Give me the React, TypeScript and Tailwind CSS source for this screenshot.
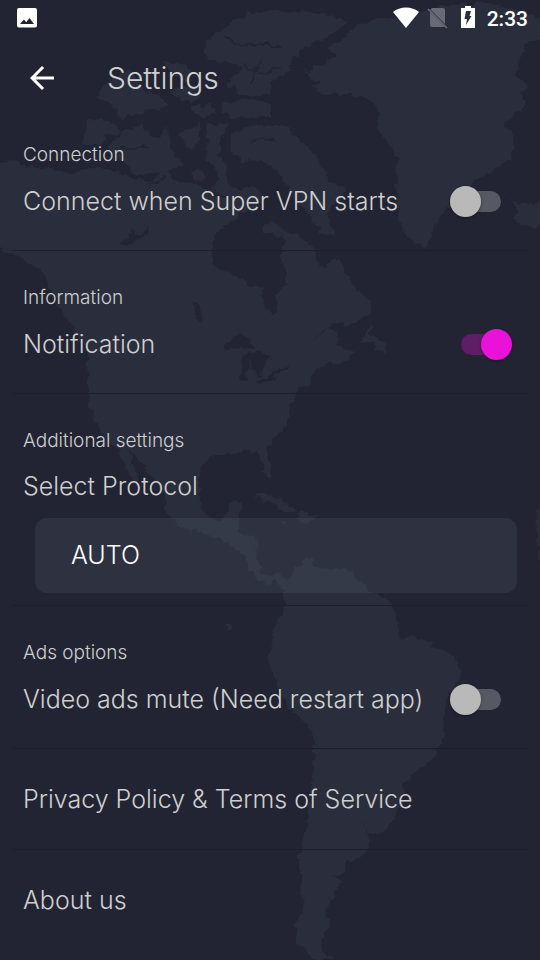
import { useState } from "react";
import type { ReactNode } from "react";

const protocols = ["AUTO", "UDP", "TCP"];

function WorldMap() {
  return (
    <svg
      className="absolute inset-0 h-full w-full"
      viewBox="0 0 540 960"
      preserveAspectRatio="xMidYMin slice"
      aria-hidden="true"
    >
      <defs>
        {/* roughens the coast lines */}
        <filter
          id="coast"
          x="0"
          y="0"
          width="540"
          height="960"
          filterUnits="userSpaceOnUse"
          colorInterpolationFilters="sRGB"
        >
          <feTurbulence type="fractalNoise" baseFrequency="0.13" numOctaves="3" seed="4" />
          <feDisplacementMap in="SourceGraphic" scale="9" xChannelSelector="R" yChannelSelector="G" />
        </filter>
      </defs>
      <g filter="url(#coast)">
        <g fill="#2a2d3b">
          {/* the Americas */}
          <path d="M-10 163 15 160 22 165 50 169 75 173 95 167 110 170 130 178 150 180 165 171 175 179 192 183 203 190 214 186 220 172 206 160 207 142 206 124 228 124 222 138 218 155 226 168 228 185 240 190 252 184 262 196 256 208 240 214 225 226 213 240 211 255 214 266 222 272 235 276 250 285 262 288 264 305 270 314 278 312 276 295 285 285 287 275 283 262 280 255 284 245 282 232 290 233 305 240 315 248 316 260 325 268 336 255 345 270 350 282 362 294 372 302 373 312 365 318 350 325 335 323 325 330 312 342 330 328 338 332 337 345 345 352 355 350 350 358 335 366 328 362 312 373 310 385 297 388 297 395 290 405 288 425 275 437 267 448 268 460 272 475 270 481 263 470 260 456 245 450 232 455 215 455 202 465 199 480 200 500 206 515 215 521 225 519 229 505 242 502 240 515 238 533 255 537 258 545 256 560 262 572 272 576 280 573 285 582 290 578 297 568 310 557 313 565 330 570 345 567 360 580 370 593 385 598 395 610 398 625 400 640 410 635 425 642 445 650 458 660 461 675 455 688 447 697 444 715 443 735 435 757 425 765 410 775 404 785 405 800 398 810 388 828 380 834 368 832 363 820 369 840 368 850 360 858 345 862 345 872 336 876 340 885 333 900 325 910 330 922 325 935 320 945 325 954 334 959 318 959 310 957 305 950 297 943 296 925 303 905 300 890 303 875 299 870 300 850 308 820 311 795 315 750 312 730 300 718 287 705 275 680 268 660 272 645 274 628 283 612 284 600 284 592 275 580 268 585 258 580 250 570 246 558 237 550 220 540 208 534 190 530 170 520 166 510 167 500 160 485 150 475 140 462 128 448 138 478 140 490 133 480 125 465 118 448 105 440 95 420 88 400 88 370 85 345 72 325 55 305 45 275 25 260 -10 245Z" />
          {/* Greenland */}
          <path d="M305 72 325 63 335 55 327 48 345 38 350 28 375 20 400 20 420 12 450 4 490 4 530 15 550 20 550 36 525 45 520 60 515 75 528 85 520 95 527 105 512 115 505 125 515 140 510 158 490 172 475 180 465 200 445 208 440 218 435 228 430 240 424 247 410 240 400 225 397 200 395 165 398 160 392 150 378 130 380 115 375 105 365 97 350 94 325 95 312 87 320 83Z" />
          {/* Arctic islands */}
          <path d="M206 42 216 34 240 16 270 11 320 12 350 22 330 35 310 45 290 60 290 70 272 84 270 95 240 95 228 84 242 68 222 62 206 58Z" />
          <path d="M222 103 250 98 273 105 272 117 235 118 222 112Z" />
          <path d="M90 118 110 121 122 130 108 136 98 146 82 143Z" />
          <path d="M108 148 120 132 140 126 158 140 168 126 172 150 182 166 165 172 140 176 122 162Z" />
          <path d="M95 97 108 82 130 70 145 92 160 96 168 106 140 113 120 118 112 106Z" />
          <path d="M178 134 200 122 200 142 190 150Z" />
          <path d="M170 92 190 84 202 96 190 104Z" />
          <path d="M190 106 212 105 216 114 200 117Z" />
          <path d="M165 62 182 64 194 72 184 80 170 74Z" />
          <path d="M192 172 202 168 206 177 196 181Z" />
          <path d="M232 135 250 125 284 125 300 140 315 155 330 180 345 190 338 202 325 212 336 238 320 232 306 210 290 192 278 172 262 160 244 162 230 150Z" />
          <path d="M262 228 272 222 286 230 276 238Z" />
          {/* Iceland and the tip of Africa */}
          <path d="M511 197 518 205 530 204 550 198 550 222 528 228 513 220 518 212Z" />
          <path d="M550 495 540 502 536 525 539 560 550 575Z" />
          {/* Newfoundland and the Caribbean */}
          <path d="M371 322 370 335 384 340 386 355 372 344 360 342Z" />
          <path d="M254 498 264 493 280 499 298 511 284 511 270 501Z" />
          <path d="M300 511 322 518 308 523 296 521Z" />
          <path d="M280 521 288 522 282 525Z" />
          <path d="M224 625 230 624 231 629 226 631Z" />
        </g>
        {/* lakes */}
        <g fill="#222433">
          <path d="M118 246 128 239 132 227 138 235 152 226 146 234 133 243Z" />
          <path d="M223 349 240 332 248 338 254 350 240 348Z" />
          <path d="M242 355 262 351 272 358 264 362 261 378 252 370 250 358 246 380 240 380Z" />
          <path d="M259 382 275 372 292 363 282 373 262 383Z" />
          <path d="M192 303 198 300 204 320 200 322Z" />
          <path d="M96 204 112 192 105 200Z" />
        </g>
        <g fill="none" stroke="#222433" strokeWidth="2">
          <path d="M224 36 244 46 268 43 282 50M242 64 262 74 280 66M250 84 262 60M120 146 136 150 150 146M250 142 262 138 275 142M40 268 50 290 58 305M206 188 228 200M148 184 166 178" />
        </g>
      </g>
    </svg>
  );
}

function StatusBar() {
  return (
    <div className="flex h-9 items-center justify-between pr-3 pl-4 text-white">
      <svg width="22" height="22" viewBox="0 0 22 22" aria-hidden="true">
        <path
          fill="currentColor"
          fillRule="evenodd"
          d="M3 1h16a2 2 0 0 1 2 2v15.500a2 2 0 0 1-2 2H3a2 2 0 0 1-2-2V3a2 2 0 0 1 2-2ZM4 17h14l-4.500-6-3.300 4.200L8 12.500Z"
        />
      </svg>
      <div className="flex items-center">
        <svg width="26" height="22" viewBox="0 0 26 22" aria-hidden="true">
          <path fill="currentColor" d="M0 5C3.500 2 8 .5 13 .5S22.500 2 26 5L13 21Z" />
        </svg>
        <svg className="ml-2 text-[#696a75]" width="22" height="22" viewBox="0 0 22 22" aria-hidden="true">
          <path fill="currentColor" d="M5 1h11a2 2 0 0 1 2 2v14L3.500 2.500ZM3 5l15 15H5a2 2 0 0 1-2-2Z" />
          <path stroke="currentColor" strokeWidth="1.600" d="M1 2 20 21" />
        </svg>
        <svg className="ml-3" width="14" height="24" viewBox="0 0 14 24" aria-hidden="true">
          <path
            fill="currentColor"
            fillRule="evenodd"
            d="M4 0h6v2h4v20H0V2h4ZM5 5 3.500 13H6L5 19 10.500 10H8.500L10 5Z"
          />
        </svg>
        <span className="ml-3 pt-0.5 font-['Roboto',sans-serif] text-[21px] leading-6 font-medium">2:33</span>
      </div>
    </div>
  );
}

function Section({ title, children }: { title: string; children: ReactNode }) {
  return (
    <section className="mx-3 border-b border-[#1d1f2b] px-[11px] pt-[33px]">
      <h2 className="text-[19px] leading-7 font-light">{title}</h2>
      {children}
    </section>
  );
}

function SwitchRow({ label, defaultChecked = false }: { label: string; defaultChecked?: boolean }) {
  const [on, setOn] = useState(defaultChecked);

  return (
    <label className="flex items-center justify-between pt-4 pr-[5px] pb-[33px] text-[25px] leading-8">
      <span className="whitespace-nowrap">{label}</span>
      <input
        type="checkbox"
        role="switch"
        checked={on}
        onChange={(e) => setOn(e.target.checked)}
        className="relative h-[31px] w-[62px] shrink-0 cursor-pointer appearance-none before:absolute before:inset-x-[11px] before:inset-y-[5px] before:rounded-full before:bg-[#565863] after:absolute after:top-0 after:left-0 after:size-[31px] after:rounded-full after:bg-[#b9b9b9] after:shadow-[0_1px_3px_rgba(0,0,0,0.4)] checked:before:bg-[#5f1d66] checked:after:left-[31px] checked:after:bg-[#e812d8]"
      />
    </label>
  );
}

function LinkRow({ label }: { label: string }) {
  return (
    <a
      href="#"
      className="mx-3 flex border-b border-[#1d1f2b] px-[11px] py-[34px] text-[25px] leading-8 last:border-transparent"
    >
      {label}
    </a>
  );
}

export default function App() {
  const [protocol, setProtocol] = useState("AUTO");

  return (
    <div className="relative min-h-screen overflow-hidden bg-[#222433] font-['Inter',sans-serif] font-[350] text-[#cfcfcf]">
      <WorldMap />
      <div className="relative">
        <StatusBar />
        <header className="flex items-center px-6 pt-6 pb-3">
          <button type="button" aria-label="Back" className="text-white">
            <svg width="36" height="36" viewBox="0 0 24 24" aria-hidden="true">
              <path fill="currentColor" d="M20 11H7.830l5.590-5.590L12 4l-8 8 8 8 1.410-1.410L7.830 13H20v-2z" />
            </svg>
          </button>
          <h1 className="ml-[47px] text-[30px] leading-9 font-light">Settings</h1>
        </header>

        <main>
          <Section title="Connection">
            <SwitchRow label="Connect when Super VPN starts" />
          </Section>

          <Section title="Information">
            <SwitchRow label="Notification" defaultChecked />
          </Section>

          <Section title="Additional settings">
            <label htmlFor="protocol" className="block pt-[15px] pb-4 text-[25px] leading-8">
              Select Protocol
            </label>
            <select
              id="protocol"
              value={protocol}
              onChange={(e) => setProtocol(e.target.value)}
              className="mb-3 ml-3 block h-[75px] w-[calc(100%-12px)] appearance-none rounded-xl bg-[#9fb0b8]/10 px-9 text-[25px] text-white"
            >
              {protocols.map((p) => (
                <option key={p} className="bg-[#2f3240]">
                  {p}
                </option>
              ))}
            </select>
          </Section>

          <Section title="Ads options">
            <SwitchRow label="Video ads mute (Need restart app)" />
          </Section>

          <LinkRow label="Privacy Policy & Terms of Service" />
          <LinkRow label="About us" />
        </main>
      </div>
    </div>
  );
}
